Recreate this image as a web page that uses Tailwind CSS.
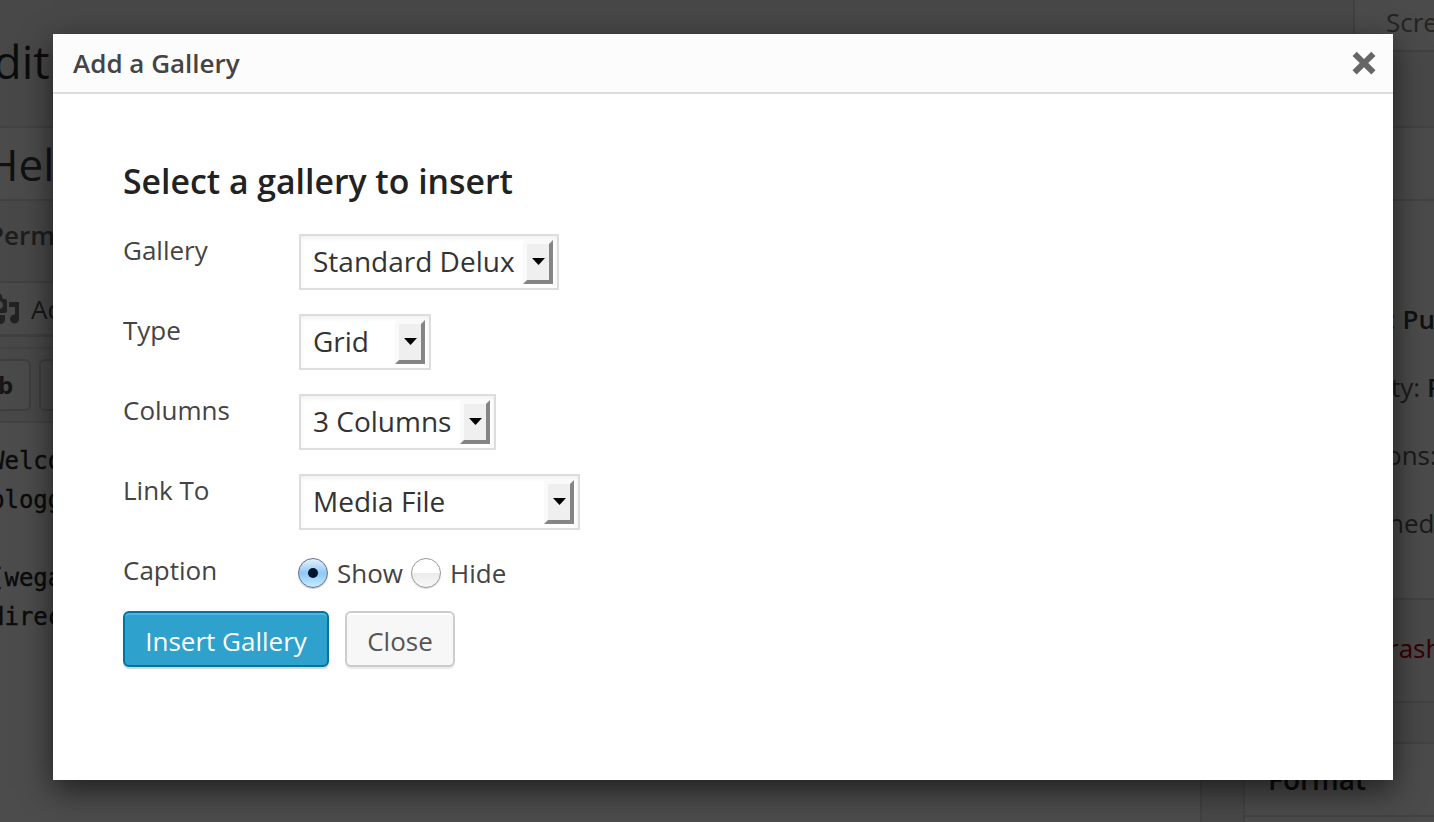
<!DOCTYPE html>
<html lang="en">
<head>
<meta charset="utf-8">
<title>Add a Gallery</title>
<script src="https://cdn.jsdelivr.net/npm/@tailwindcss/browser@4"></script>
</head>
<body class="font-['Open_Sans',sans-serif] text-[26px] leading-8">
<div class="relative h-[822px] w-[1434px] overflow-hidden bg-[#484848]">

  <!-- Editor page, dimmed -->
  <div class="flex h-[126px] justify-between">
    <div class="-ml-[32px] pt-[29px] text-[46px] leading-[64px] text-[#0c0c0c]">Edit</div>
    <div class="h-[52px] w-[81px] border-b-2 border-l-2 border-[#414141] bg-[#4b4b4b] pl-[31px] pt-[6px] text-[#242424]">Scre</div>
  </div>
  <div class="flex h-[696px]">
    <div class="flex w-[1202px] shrink-0 flex-col border-r-2 border-[#424242]">
      <div class="h-[75px] shrink-0 border-y-2 border-[#424242] bg-[#4b4b4b]">
        <div class="-ml-[14px] pt-[4px] text-[44px] leading-[64px] text-[#111]">Hel</div>
      </div>
      <div class="h-[80px] shrink-0 pt-[18px] font-semibold text-[#1d1d1d]"><div class="-ml-[12px]">Perm</div></div>
      <div class="flex h-[56px] shrink-0 items-center border-b-[3px] border-t-2 border-[#414141] bg-[#4a4a4a] text-[#171717]">
        <svg class="h-[34px] w-[20px] shrink-0 fill-[#222]" viewBox="0 0 20 34"><path fill-rule="evenodd" d="M0 2h1l2 5h2q2 0 2 2v10q0 2-2 2H0v-4q3-1 3-4t-3-4zM9 10h10v17a4.500 4.500 0 1 1-4-4.500V15H9zM0 23h5v4q0 5-5 5z"/></svg>
        <span class="ml-[11px]">Ad</span>
      </div>
      <div class="mt-[10px] flex h-[76px] shrink-0 gap-2 border-y-2 border-[#434343] pt-[10px]">
        <div class="-ml-2 h-[52px] w-[39px] rounded-[6px] border-2 border-[#3e3e3e] bg-[#4a4a4a] pl-[4px] pt-[8px] text-[24px] font-bold text-[#151515]">b</div>
        <div class="h-[52px] w-[60px] rounded-[6px] border-2 border-[#3e3e3e] bg-[#4a4a4a]"></div>
      </div>
      <div class="flex-1 bg-[#4c4c4c] pt-[19px] font-['DejaVu_Sans_Mono',monospace] text-[24px] leading-[39px] text-[#0b0b0b] [-webkit-text-stroke:0.4px_#0b0b0b]">
        <div class="-ml-[10px]">Welco</div>
        <div class="-ml-[10px]">blogg</div>
        <div class="-ml-[10px] mt-[39px]"><span class="text-[#0b0b40]">[</span>wega</div>
        <div class="-ml-[10px]">direc</div>
      </div>
    </div>
    <div class="ml-[41px] flex w-[191px] shrink-0 flex-col">
      <div class="h-[75px] shrink-0 border-y-2 border-l-2 border-[#424242] bg-[#4b4b4b]"></div>
      <div class="flex h-[397px] shrink-0 flex-col gap-9 whitespace-nowrap border-l-2 border-[#424242] bg-[#4b4b4b] pt-[102px] text-[#1a1a1a]">
        <div class="pl-[144px]">: <b class="font-semibold text-[#111]">Pu</b></div>
        <div class="pl-[146px]">ty: <b class="font-semibold text-[#111]">P</b></div>
        <div class="pl-[141px]">ons:</div>
        <div class="pl-[143px]">hed</div>
      </div>
      <div class="h-[105px] shrink-0 border-b-2 border-l-2 border-t-2 border-[#424242] bg-[#494949] pl-[143px] pt-[32px] text-[#350000]">rash</div>
      <div class="mt-[39px] h-[75px] shrink-0 border-y-2 border-l-2 border-[#424242] bg-[#4b4b4b] pl-[23px] pt-[19px] text-[28px] font-semibold text-[#0b0b0b]">Format</div>
      <div class="flex-1 border-l-2 border-[#424242] bg-[#4b4b4b]"></div>
    </div>
  </div>

  <!-- Dialog -->
  <div class="absolute left-[53px] top-[34px] flex h-[746px] w-[1340px] flex-col bg-white text-[#444] shadow-[0_10px_30px_rgba(0,0,0,0.6)]">
    <div class="flex h-[60px] shrink-0 items-center justify-between border-b-2 border-[#ddd] bg-[#fcfcfc] pl-5 pr-[17px]">
      <div class="font-semibold">Add a Gallery</div>
      <svg class="h-6 w-6 fill-[#666]" viewBox="0 0 24 24"><path d="M4.700.7 12 8l7.300-7.300 4.200 4.200L16.200 12l7.300 7.300-4.200 4.200L12 16.200l-7.300 7.300L.5 19.300 7.800 12 .5 4.900z"/></svg>
    </div>
    <div class="px-[70px] pt-[63px]">
      <h2 class="h-[77px] text-[33.8px] font-semibold leading-[48px] text-[#222]">Select a gallery to insert</h2>
      <div class="grid grid-cols-[176px_auto] justify-start">
        <div class="h-20">Gallery</div>
        <div class="flex h-14 w-[260px] justify-between border-2 border-[#ddd] pl-3 pr-1 pt-1 text-[28px] text-[#333] shadow-[inset_0_2px_4px_rgba(0,0,0,0.07)]">
          <span class="pt-[5px]">Standard Delux</span>
          <span class="flex h-11 w-[30px] items-center justify-center border-4 border-b-[#858585] border-l-[#fafafa] border-r-[#858585] border-t-[#fafafa] bg-[#efefef]"><svg class="-mt-[2px] h-[7px] w-[13px]" viewBox="0 0 13 7"><path d="M0 0h13L6.500 7z"/></svg></span>
        </div>
        <div class="h-20">Type</div>
        <div class="flex h-14 w-[132px] justify-between border-2 border-[#ddd] pl-3 pr-1 pt-1 text-[28px] text-[#333] shadow-[inset_0_2px_4px_rgba(0,0,0,0.07)]">
          <span class="pt-[5px]">Grid</span>
          <span class="flex h-11 w-[30px] items-center justify-center border-4 border-b-[#858585] border-l-[#fafafa] border-r-[#858585] border-t-[#fafafa] bg-[#efefef]"><svg class="-mt-[2px] h-[7px] w-[13px]" viewBox="0 0 13 7"><path d="M0 0h13L6.500 7z"/></svg></span>
        </div>
        <div class="h-20">Columns</div>
        <div class="flex h-14 w-[197px] justify-between border-2 border-[#ddd] pl-3 pr-1 pt-1 text-[28px] text-[#333] shadow-[inset_0_2px_4px_rgba(0,0,0,0.07)]">
          <span class="pt-[5px]">3 Columns</span>
          <span class="flex h-11 w-[30px] items-center justify-center border-4 border-b-[#858585] border-l-[#fafafa] border-r-[#858585] border-t-[#fafafa] bg-[#efefef]"><svg class="-mt-[2px] h-[7px] w-[13px]" viewBox="0 0 13 7"><path d="M0 0h13L6.500 7z"/></svg></span>
        </div>
        <div class="h-20">Link To</div>
        <div class="flex h-14 w-[281px] justify-between border-2 border-[#ddd] pl-3 pr-1 pt-1 text-[28px] text-[#333] shadow-[inset_0_2px_4px_rgba(0,0,0,0.07)]">
          <span class="pt-[5px]">Media File</span>
          <span class="flex h-11 w-[30px] items-center justify-center border-4 border-b-[#858585] border-l-[#fafafa] border-r-[#858585] border-t-[#fafafa] bg-[#efefef]"><svg class="-mt-[2px] h-[7px] w-[13px]" viewBox="0 0 13 7"><path d="M0 0h13L6.500 7z"/></svg></span>
        </div>
        <div class="h-[57px]">Caption</div>
        <div class="-ml-[1px] flex h-[38px] items-center">
          <span class="flex size-[30px] items-center justify-center rounded-full border-[1.500px] border-[#6b6b8a] bg-linear-to-b from-[#e4f2fd] via-[#8fc8f5] to-[#c4edff] shadow-[0_1px_1px_rgba(0,0,0,0.2)]"><span class="size-[10px] rounded-full bg-[#03152b]"></span></span>
          <span class="ml-[9px] w-[74px]">Show</span>
          <span class="size-[30px] rounded-full border-[1.500px] border-[#999] bg-linear-to-b from-white from-50% via-[#ebebeb] via-50% to-[#f8f8f8] shadow-[0_1px_1px_rgba(0,0,0,0.15)]"></span>
          <span class="ml-[9px]">Hide</span>
        </div>
      </div>
      <div class="flex gap-4">
        <div class="h-14 w-[206px] rounded-[6px] border-2 border-[#0074a2] bg-[#2ea2cc] pt-[12px] text-center text-white shadow-[inset_0_2px_0_rgba(120,200,230,0.5),0_2px_0_rgba(0,0,0,0.15)]">Insert Gallery</div>
        <div class="h-14 w-[110px] rounded-[6px] border-2 border-[#ccc] bg-[#f7f7f7] pt-[12px] text-center text-[#555] shadow-[inset_0_2px_0_#fff,0_2px_0_rgba(0,0,0,0.08)]">Close</div>
      </div>
    </div>
  </div>
</div>
</body>
</html>
